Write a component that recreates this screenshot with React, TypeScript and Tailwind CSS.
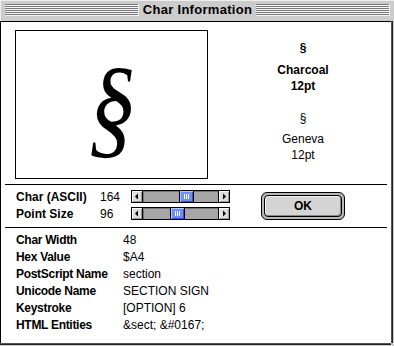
import React from 'react';

const sans = "font-['Liberation_Sans',Arial,sans-serif]";

function Stripes() {
  return (
    <div className="h-[12px] flex-1 bg-[repeating-linear-gradient(to_bottom,#7a7a7a_0px,#7a7a7a_1px,#f4f4f4_1px,#f4f4f4_2px)] border-r border-b border-[#f4f4f4]" />
  );
}

function ScrollBar({ offset }: { offset: number }) {
  return (
    <div className="flex h-[13px] w-[99px] border border-black bg-[#999]">
      <div className="flex w-[11px] items-center justify-center border-r border-black bg-[#dddddd] shadow-[inset_1px_1px_0_#fff,inset_-1px_-1px_0_#999]">
        <svg width="4" height="7" viewBox="0 0 4 7">
          <path d="M3 0.5V6.5L0 3.5Z" fill="#000" />
        </svg>
      </div>
      <div className="flex flex-1 bg-[#a6a6a6] shadow-[inset_1px_1px_0_#777]">
        <div
          className="flex h-full w-[15px] items-center justify-center gap-[1px] border-x border-black bg-[#6f8cff] shadow-[inset_1px_1px_0_#b4c4ff,inset_-1px_-1px_0_#3a50c8]"
          style={{ marginLeft: offset }}
        >
          <div className="h-[5px] w-[1px] bg-white" />
          <div className="h-[5px] w-[1px] bg-white" />
          <div className="h-[5px] w-[1px] bg-white" />
        </div>
      </div>
      <div className="flex w-[11px] items-center justify-center border-l border-black bg-[#dddddd] shadow-[inset_1px_1px_0_#fff,inset_-1px_-1px_0_#999]">
        <svg width="4" height="7" viewBox="0 0 4 7">
          <path d="M1 0.5V6.5L4 3.5Z" fill="#000" />
        </svg>
      </div>
    </div>
  );
}

const info: [string, string][] = [
  ['Char Width', '48'],
  ['Hex Value', '$A4'],
  ['PostScript Name', 'section'],
  ['Unicode Name', 'SECTION SIGN'],
  ['Keystroke', '[OPTION] 6'],
  ['HTML Entities', '&sect; &#0167;'],
];

export default function App() {
  return (
    <div className={`flex h-[346px] w-[394px] flex-col bg-[#cccccc] ${sans} text-black`}>
      {/* title bar */}
      <div className="flex h-[21px] items-start border-l border-t border-[#eeeeee] pt-[3px] pl-[4px] pr-[4px]">
        <Stripes />
        <div className="px-[4px] text-[13px] font-bold leading-[13px] tracking-[0.3px] -mt-[1px]">Char Information</div>
        <Stripes />
      </div>

      {/* body */}
      <div className="flex flex-1 flex-col border-t border-l border-black bg-white shadow-[1px_0_0_#555,2px_0_0_#222,0_1px_0_#555,0_2px_0_#222] mb-[3px] mr-[3px]">
        <div className="flex h-[162px]">
          <div className="ml-[14px] mt-[8px] flex h-[149px] w-[193px] items-center justify-center border border-black">
            <span className="font-['Liberation_Serif',serif] text-[112px] italic leading-none scale-x-[0.85] mt-[2px]">§</span>
          </div>
          <div className="ml-[7px] flex w-[176px] flex-col items-center pt-[18px] text-[12px] leading-[16px]">
            <div className="font-bold">§</div>
            <div className="mt-[6px] font-bold">Charcoal</div>
            <div className="font-bold">12pt</div>
            <div className="mt-[16px]">§</div>
            <div className="mt-[5px]">Geneva</div>
            <div>12pt</div>
          </div>
        </div>

        <div className="mx-[4px] h-[1px] bg-black" />

        <div className="flex h-[42px]">
          <div className="flex flex-col pl-[15px] pt-[3px] text-[12px]">
            <div className="flex h-[17px] items-center">
              <span className="w-[84px] font-bold">Char (ASCII)</span>
              <span className="w-[31px]">164</span>
              <ScrollBar offset={36} />
            </div>
            <div className="flex h-[17px] items-center">
              <span className="w-[84px] font-bold">Point Size</span>
              <span className="w-[31px]">96</span>
              <ScrollBar offset={27} />
            </div>
          </div>
          <div className="ml-[31px] mt-[7px] flex h-[28px] w-[84px] rounded-[6px] border border-black bg-[#b8b8b8] p-[2px]">
            <div className="flex flex-1 items-center justify-center rounded-[4px] border border-black bg-[#d4d4d4] text-[12px] font-bold shadow-[inset_1px_1px_0_#f2f2f2,inset_-1px_-1px_0_#888]">
              OK
            </div>
          </div>
        </div>

        <div className="mx-[4px] h-[1px] bg-black" />

        <div className="flex flex-col pl-[15px] pt-[3px] text-[12px]">
          {info.map(([k, v]) => (
            <div key={k} className="flex h-[17px] items-center">
              <span className="w-[107px] font-bold tracking-[-0.3px]">{k}</span>
              <span>{v}</span>
            </div>
          ))}
        </div>
      </div>
    </div>
  );
}
